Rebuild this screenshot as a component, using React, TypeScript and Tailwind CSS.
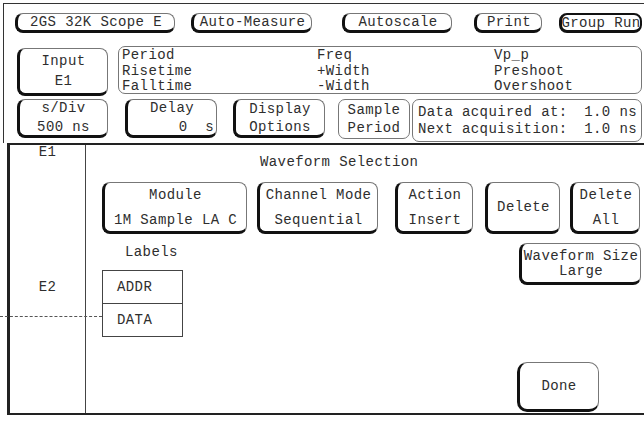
import React from "react";

type BP = {
  className?: string;
  children: React.ReactNode;
  thin?: boolean;
};

function Btn({ className = "", children, thin }: BP) {
  const base = thin
    ? "border border-[#777] rounded-[7px] "
    : "border-t border-r border-t-[#777] border-r-[#777] border-l-[3px] border-b-[3px] border-l-[#111] border-b-[#111] rounded-[8px] ";
  return (
    <div
      className={
        base +
        "flex flex-col items-center justify-center shrink-0 whitespace-nowrap " +
        className
      }
    >
      {children}
    </div>
  );
}

export default function App() {
  return (
    <div className="relative w-[644px] h-[421px] bg-white overflow-hidden text-[#2e2e2e] font-['Liberation_Mono',monospace] text-[14px] tracking-[0.4px] leading-[14px]">
      {/* top control area */}
      <div className="ml-[3px] mt-[3px] h-[140px] border-t border-l border-[#333]">
        <div className="flex pl-[11px] pt-[9px]">
          <Btn className="w-[160px] h-[20px]">2GS 32K Scope E</Btn>
          <Btn className="ml-[16px] w-[121px] h-[20px]">Auto-Measure</Btn>
          <Btn className="ml-[30px] w-[110px] h-[20px]">Autoscale</Btn>
          <Btn className="ml-[22px] w-[68px] h-[20px]">Print</Btn>
          <div className="ml-[17px] w-[83px] h-[20px] border-2 border-l-[3px] border-b-[3px] border-[#111] rounded-[8px] flex items-center justify-center shrink-0 whitespace-nowrap">
            Group Run
          </div>
        </div>

        <div className="flex items-start pl-[13px] mt-[13px]">
          <Btn className="mt-[2px] w-[91px] h-[48px] gap-[6px]">
            <span>Input</span>
            <span>E1</span>
          </Btn>
          <div className="ml-[10px] w-[524px] h-[48px] border border-[#777] rounded-[7px] flex pl-[3px] pt-[1px] whitespace-nowrap">
            <div className="w-[195px] flex flex-col gap-[1.5px]">
              <span>Period</span>
              <span>Risetime</span>
              <span>Falltime</span>
            </div>
            <div className="w-[177px] flex flex-col gap-[1.5px]">
              <span>Freq</span>
              <span>+Width</span>
              <span>-Width</span>
            </div>
            <div className="flex flex-col gap-[1.5px]">
              <span>Vp_p</span>
              <span>Preshoot</span>
              <span>Overshoot</span>
            </div>
          </div>
        </div>

        <div className="flex items-start pl-[13px] mt-[3px]">
          <Btn className="w-[91px] h-[39px] gap-[5px]">
            <span>s/Div</span>
            <span>500 ns</span>
          </Btn>
          <Btn className="ml-[17px] w-[92px] h-[39px] gap-[5px]">
            <span>Delay</span>
            <span className="self-end mr-[2px] whitespace-pre">0  s</span>
          </Btn>
          <Btn className="ml-[16px] w-[92px] h-[39px] gap-[4px]">
            <span>Display</span>
            <span>Options</span>
          </Btn>
          <Btn thin className="ml-[13px] w-[72px] h-[40px] gap-[4px]">
            <span>Sample</span>
            <span>Period</span>
          </Btn>
          <div className="ml-[2px] w-[230px] h-[43px] border border-[#777] rounded-[7px] flex flex-col justify-center gap-[3px] pl-[5px] pr-[4px] whitespace-nowrap">
            <div className="flex justify-between">
              <span>Data acquired at:</span>
              <span>1.0 ns</span>
            </div>
            <div className="flex justify-between">
              <span>Next acquisition:</span>
              <span>1.0 ns</span>
            </div>
          </div>
        </div>
      </div>

      {/* main area */}
      <div className="ml-[7px] h-[272px] border-t-2 border-l-[3px] border-b-2 border-[#222] flex">
        <div className="w-[76px] border-r border-[#444] flex flex-col items-center shrink-0">
          <span className="mt-[0px]">E1</span>
          <span className="mt-[121px]">E2</span>
        </div>
        <div className="flex-1 flex flex-col">
          <div className="ml-[174px] mt-[10px] whitespace-nowrap">Waveform Selection</div>

          <div className="flex mt-[13px] ml-[16px] h-[52px]">
            <Btn className="w-[145px] h-[52px] gap-[11px]">
              <span>Module</span>
              <span>1M Sample LA C</span>
            </Btn>
            <Btn className="ml-[10px] w-[121px] h-[52px] gap-[11px]">
              <span>Channel Mode</span>
              <span>Sequential</span>
            </Btn>
            <Btn className="ml-[17px] w-[78px] h-[52px] gap-[11px]">
              <span>Action</span>
              <span>Insert</span>
            </Btn>
            <Btn className="ml-[12px] w-[75px] h-[52px]">
              <span>Delete</span>
            </Btn>
            <Btn className="ml-[10px] w-[70px] h-[52px] gap-[11px]">
              <span>Delete</span>
              <span>All</span>
            </Btn>
          </div>

          <div className="flex ml-[16px] h-[104px]">
            <div className="flex flex-col w-[81px]">
              <span className="ml-[23px] mt-[11px] whitespace-nowrap">Labels</span>
              <div className="mt-[11px] border border-[#444] w-[81px]">
                <div className="h-[33px] border-b border-[#444] flex items-center pl-[14px]">ADDR</div>
                <div className="h-[32px] flex items-center pl-[14px]">DATA</div>
              </div>
            </div>
            <Btn className="ml-auto mr-[3px] mt-[9px] w-[122px] h-[42px] gap-[1px]">
              <span>Waveform Size</span>
              <span>Large</span>
            </Btn>
          </div>

          <Btn className="ml-[431px] mt-[24px] w-[82px] h-[50px] rounded-[10px]">
            <span>Done</span>
          </Btn>
        </div>
      </div>

      {/* marker line crossing the label column */}
      <div className="absolute top-[316px] left-0 w-[102px] border-t border-dashed border-[#555]" />
    </div>
  );
}
